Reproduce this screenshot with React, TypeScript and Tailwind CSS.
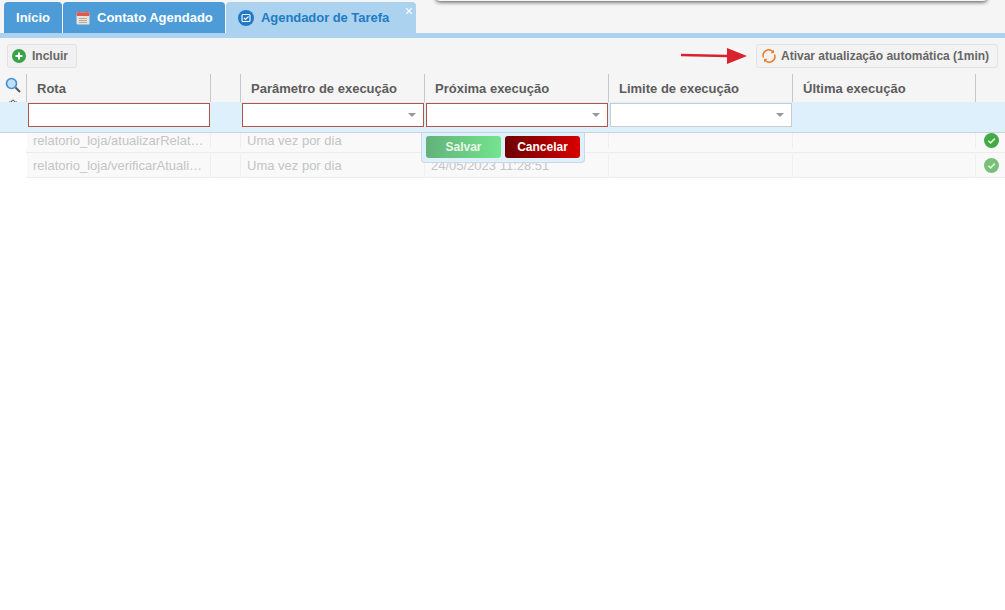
import React from "react";
import { Settings } from "lucide-react";

const columns = [
  { label: "Rota", width: "w-[184px]" },
  { label: "", width: "w-[30px]" },
  { label: "Parâmetro de execução", width: "w-[184px]" },
  { label: "Próxima execução", width: "w-[184px]" },
  { label: "Limite de execução", width: "w-[184px]" },
  { label: "Última execução", width: "w-[183px]" },
  { label: "", width: "w-[30px]" },
];

const rows = [
  { rota: "relatorio_loja/atualizarRelat…", proxima: "", height: "h-5 pb-1", iconClass: "opacity-100" },
  { rota: "relatorio_loja/verificarAtuali…", proxima: "24/05/2023 11:28:51", height: "h-[25px] pt-px", iconClass: "opacity-70" },
];

const CheckIcon = ({ className }: { className: string }) => (
  <svg viewBox="0 0 14 14" className={className}>
    <circle cx="7" cy="7" r="7" fill="#43a947" />
    <path d="M4 7.2l2.1 2 4-4" fill="none" stroke="#d9f7c8" strokeWidth="1.5" />
  </svg>
);

const Caret = () => (
  <span className="absolute right-[7px] top-[9px] h-0 w-0 border-x-[4px] border-t-[4px] border-x-transparent border-t-[#999]" />
);

const Tab = ({ children, className }: { children: React.ReactNode; className: string }) => (
  <div className={`flex h-[31px] items-center rounded-t-[4px] text-[13px] font-bold ${className}`}>{children}</div>
);

export default function App() {
  return (
    <div className="relative h-[610px] w-[1005px] overflow-hidden bg-white font-['Liberation_Sans',Arial,sans-serif] text-[#555]">
      <div className="absolute left-[436px] top-[-10px] h-[11px] w-[551px] rounded-b-[4px] bg-[#f5f5f5] shadow-[0_1px_4px_rgba(0,0,0,0.7)]" />

      {/* tabs */}
      <div className="flex h-[33px] items-end gap-px bg-[#f5f5f5] pl-1">
        <Tab className="w-[58px] justify-center bg-[#4d9cd8] text-white">Início</Tab>
        <Tab className="w-[162px] gap-[7px] bg-[#4d9cd8] pl-[13px] text-white">
          <svg viewBox="0 0 14 14" className="h-[14px] w-[14px]">
            <rect x="0.5" y="1.5" width="13" height="12" rx="1" fill="#e9e2d8" />
            <rect x="0.5" y="1.5" width="13" height="3.5" rx="1" fill="#e2574c" />
            <path d="M3 7.5h8M3 9.5h8M3 11.5h8" stroke="#b5ab9c" strokeWidth="1" />
            <path d="M3.5 0.5v2M10.5 0.5v2" stroke="#e2574c" strokeWidth="1.5" />
          </svg>
          Contato Agendado
        </Tab>
        <Tab className="relative w-[190px] gap-[7px] bg-[#abd2ee] pl-[12px] text-[#1f7cc4]">
          <svg viewBox="0 0 16 16" className="h-4 w-4">
            <circle cx="8" cy="8" r="8" fill="#1f78c8" />
            <rect x="4" y="4.5" width="8" height="7" rx="1" fill="none" stroke="#fff" strokeWidth="1.1" />
            <path d="M6 8l1.5 1.4L10.5 6.5" fill="none" stroke="#fff" strokeWidth="1.1" />
          </svg>
          <span className="tracking-[-0.05px]">Agendador de Tarefa</span>
          <span className="absolute right-[3px] top-[2px] text-[14px] font-normal leading-none text-white">×</span>
        </Tab>
      </div>
      <div className="h-[5px] bg-[#abd2ee]" />

      {/* toolbar */}
      <div className="flex h-[36px] items-center justify-between bg-[#f5f5f5] pl-[7px] pr-[7px]">
        <button className="flex h-6 w-[70px] items-center gap-[6px] rounded-[3px] border border-[#e2e2e2] bg-[#f1f1f1] pl-[4px] text-xs font-bold text-[#666]">
          <svg viewBox="0 0 14 14" className="h-[14px] w-[14px]">
            <circle cx="7" cy="7" r="7" fill="#3aa34a" />
            <path d="M7 3.5v7M3.5 7h7" stroke="#fff" strokeWidth="2" />
          </svg>
          Incluir
        </button>
        <div className="flex items-center gap-[9px]">
          <svg viewBox="0 0 66 16" className="h-4 w-[66px]">
            <path d="M0 7l46 1" stroke="#d8222f" strokeWidth="2.5" />
            <path d="M46 0l20 8-20 8z" fill="#d8222f" />
          </svg>
          <button className="flex h-6 w-[242px] items-center gap-[5px] rounded-[3px] border border-[#e2e2e2] bg-[#f3f3f3] pl-[5px] text-xs font-bold text-[#666]">
            <svg viewBox="0 0 14 14" className="h-[14px] w-[14px]" fill="none" stroke="#ee7c22" strokeWidth="1.5">
              <path d="M1.5 8.5A5.6 5.6 0 0 1 11 2.9" />
              <path d="M12.5 5.5A5.6 5.6 0 0 1 3 11.1" />
              <path d="M11.8 0.6l0.2 3.4-3.4 0.2z" fill="#ee7c22" stroke="none" />
              <path d="M2.2 13.4L2 10l3.4-0.2z" fill="#ee7c22" stroke="none" />
            </svg>
            Ativar atualização automática (1min)
          </button>
        </div>
      </div>

      {/* header */}
      <div className="flex h-7 bg-[#f5f5f5]">
        <div className="relative w-[26px] overflow-hidden">
          <svg viewBox="0 0 16 16" className="absolute left-[5px] top-[3px] h-[16px] w-[16px]">
            <circle cx="6.5" cy="6.5" r="5" fill="#bfe0f7" stroke="#3f8fd0" strokeWidth="1.6" />
            <path d="M10.5 10.5l4.5 4.5" stroke="#555" strokeWidth="2" />
          </svg>
          <Settings size={12} className="absolute left-[7px] top-[25px] text-[#555]" />
        </div>
        {columns.map((col, i) => (
          <div
            key={i}
            className={`flex items-center border-l border-[#c8c8c8] pl-[10px] pt-px text-[13px] font-bold text-[#5c5c5c] ${col.width}`}
          >
            {col.label}
          </div>
        ))}
      </div>

      {/* filter row */}
      <div className="relative flex h-[31px] border-b border-[#c9d3da] bg-[#dff0fd] pl-7 pt-px">
        <input className="h-6 w-[182px] border border-[#b5524a] bg-white" />
        <div className="relative ml-8 h-6 w-[182px] border border-[#b5524a] bg-white"><Caret /></div>
        <div className="relative ml-[2px] h-6 w-[182px] border border-[#b5524a] bg-white"><Caret /></div>
        <div className="relative ml-[2px] h-6 w-[182px] border border-[#ccc] bg-white"><Caret /></div>
      </div>

      {/* rows */}
      {rows.map((row, i) => (
        <div key={i} className={`ml-[26px] flex border-b border-[#ececec] bg-[#f9f9f9] text-[13px] text-[#c4c4c4] ${row.height}`}>
          <div className="flex w-[184px] items-center truncate border-l border-white pl-[6px]">{row.rota}</div>
          <div className="w-[30px] border-l border-[#efefef]" />
          <div className="flex w-[184px] items-center border-l border-[#efefef] pl-[6px]">Uma vez por dia</div>
          <div className="flex w-[184px] items-center border-l border-[#efefef] pl-[6px]">{row.proxima}</div>
          <div className="w-[184px] border-l border-[#efefef]" />
          <div className="w-[183px] border-l border-[#efefef]" />
          <div className="flex w-[30px] items-center justify-center border-l border-[#efefef] pl-[1px]">
            <CheckIcon className={`h-[15px] w-[15px] ${row.iconClass}`} />
          </div>
        </div>
      ))}

      {/* editor buttons, float over the rows */}
      <div className="absolute left-[421px] top-[133px] flex h-[30px] w-[164px] gap-1 rounded-b-[4px] border border-t-0 border-[#c9d9e6] bg-[#dff0fd] pl-1 pt-[3px]">
        <button className="h-[22px] w-[75px] rounded-[3px] bg-gradient-to-r from-[#62b27a] to-[#74e48e] text-xs font-bold text-[#e8f7ea]">Salvar</button>
        <button className="h-[22px] w-[75px] rounded-[3px] bg-gradient-to-r from-[#6f0000] to-[#d90000] text-xs font-bold text-white">Cancelar</button>
      </div>
    </div>
  );
}
